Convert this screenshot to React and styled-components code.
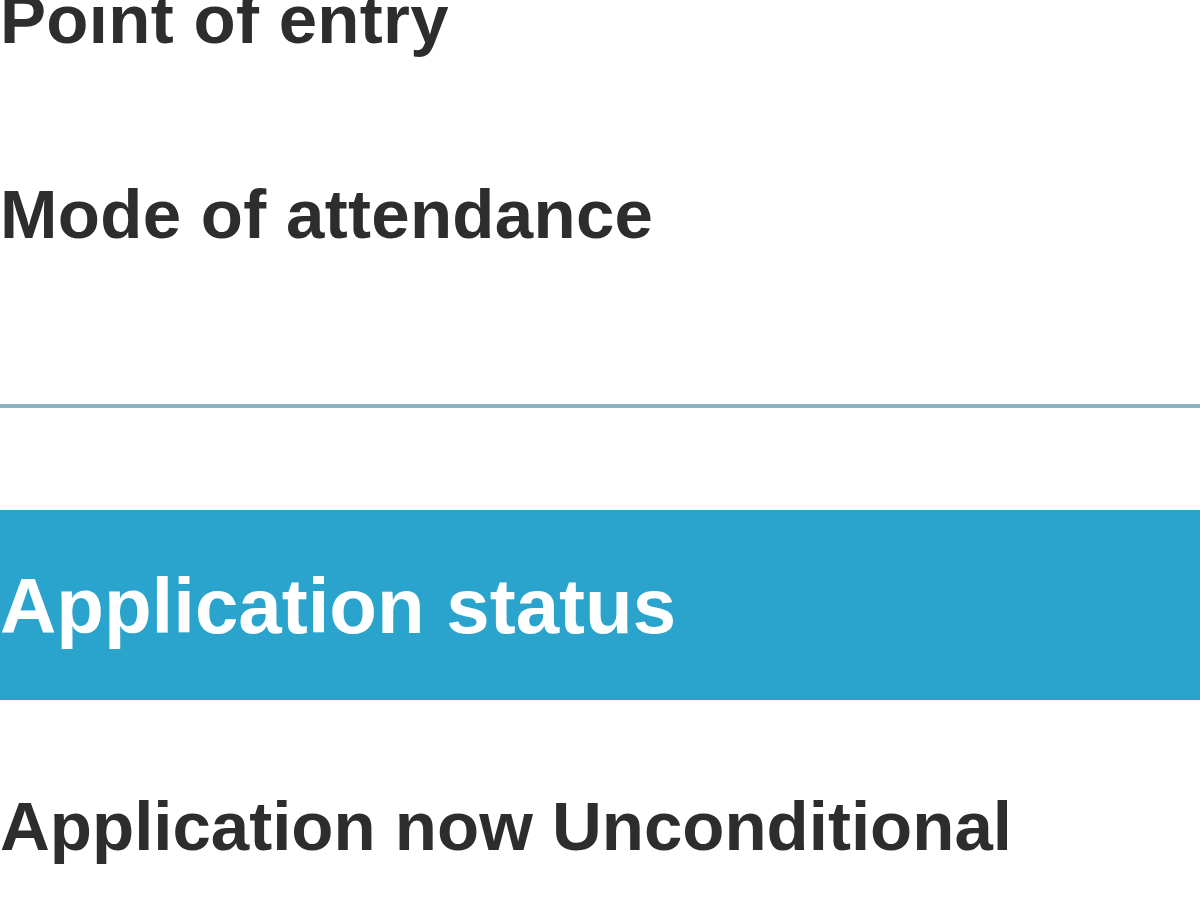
import React from 'react';
import styled, { createGlobalStyle } from 'styled-components';

const GlobalStyle = createGlobalStyle`
    html, body {
        margin: 0;
        padding: 0;
        background: #ffffff;
        overflow: hidden;
    }
    body {
        font-family: "Liberation Sans", Arial, Helvetica, sans-serif;
        -webkit-font-smoothing: antialiased;
    }
`;

const Page = styled.div`
    width: 1200px;
    height: 900px;
    overflow: hidden;
    display: flex;
    flex-direction: column;
`;

// first row is scrolled slightly past the top edge, as in the screenshot
const FieldList = styled.div`
    display: flex;
    flex-direction: column;
    margin-top: -15px;
`;

const Field = styled.div`
    height: 195px;
    font-size: 69px;
    line-height: 1;
    font-weight: 700;
    letter-spacing: 0.3px;
    color: #2d2d2f;
    white-space: nowrap;
`;

const Divider = styled.hr`
    margin: 29px 0 0;
    border: 0;
    height: 4px;
    background: #8cb2c2;
`;

const SectionHeader = styled.h2`
    margin: 102px 0 0;
    height: 190px;
    box-sizing: border-box;
    padding-top: 57px;
    background: #2aa4cd;
    color: #ffffff;
    font-size: 78px;
    line-height: 1;
    font-weight: 700;
    white-space: nowrap;
`;

const StatusText = styled.p`
    margin: 92px 0 0;
    font-size: 69px;
    line-height: 1;
    font-weight: 700;
    color: #2d2d2f;
    white-space: nowrap;
`;

const fields = ['Point of entry', 'Mode of attendance'];

function App() {
    return (
        <>
            <GlobalStyle />
            <Page>
                <FieldList>
                    {fields.map((label) => (
                        <Field key={label}>{label}</Field>
                    ))}
                </FieldList>
                <Divider />
                <SectionHeader>Application status</SectionHeader>
                <StatusText>Application now Unconditional</StatusText>
            </Page>
        </>
    );
}

export default App;
